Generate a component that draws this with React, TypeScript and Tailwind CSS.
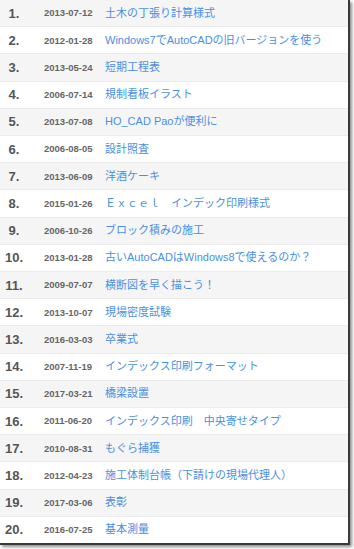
import React from "react";

const items: [string, string][] = [
  ["2013-07-12", "土木の丁張り計算様式"],
  ["2012-01-28", "Windows7でAutoCADの旧バージョンを使う"],
  ["2013-05-24", "短期工程表"],
  ["2006-07-14", "規制看板イラスト"],
  ["2013-07-08", "HO_CAD Paoが便利に"],
  ["2006-08-05", "設計照査"],
  ["2013-06-09", "洋酒ケーキ"],
  ["2015-01-26", "Ｅｘｃｅｌ　インデック印刷様式"],
  ["2006-10-26", "ブロック積みの施工"],
  ["2013-01-28", "古いAutoCADはWindows8で使えるのか？"],
  ["2009-07-07", "横断図を早く描こう！"],
  ["2013-10-07", "現場密度試験"],
  ["2016-03-03", "卒業式"],
  ["2007-11-19", "インデックス印刷フォーマット"],
  ["2017-03-21", "橋梁設置"],
  ["2011-06-20", "インデックス印刷　中央寄せタイプ"],
  ["2010-08-31", "もぐら捕獲"],
  ["2012-04-23", "施工体制台帳（下請けの現場代理人）"],
  ["2017-03-06", "表彰"],
  ["2016-07-25", "基本測量"],
];

export default function App() {
  return (
    <div className="w-[354px] h-[549px] bg-white" style={{ fontFamily: '"Liberation Sans", "Noto Sans CJK JP", sans-serif' }}>
      <div className="w-[350px] h-[545px] border-r-2 border-b-2 border-[#3a3a3a] shadow-[2px_2px_3px_rgba(0,0,0,0.45)] flex flex-col bg-white">
        {items.map(([date, title], i) => (
          <div
            key={i}
            className={`flex-1 flex items-center ${i % 2 === 0 ? "bg-[#f5f5f5]" : "bg-white"} ${i < items.length - 1 ? "border-b border-[#ebebeb]" : ""}`}
          >
            <div className="w-[28px] text-center text-[13px] font-bold text-[#555555] leading-none">{i + 1}.</div>
            <div className="ml-[16px] w-[61px] text-[9.5px] font-bold text-[#666666] leading-none">{date}</div>
            <div className="text-[11px] text-[#4a90e2] leading-none whitespace-nowrap">{title}</div>
          </div>
        ))}
      </div>
    </div>
  );
}
